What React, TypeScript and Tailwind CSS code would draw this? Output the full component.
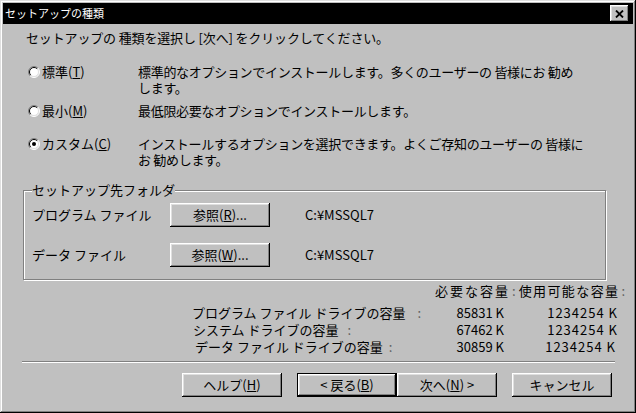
import React from 'react';

const bevel =
  "shadow-[inset_-1px_-1px_0_#000,inset_1px_1px_0_#fff,inset_-2px_-2px_0_#808080,inset_2px_2px_0_#dfdfdf]";

function Radio({ checked }: { checked?: boolean }) {
  return (
    <svg width="12" height="12" viewBox="0 0 12 12" className="block">
      <circle cx="6" cy="6" r="5" fill="#fff" />
      <path d="M2.1 9.9 A5.5 5.5 0 0 1 9.9 2.1" fill="none" stroke="#808080" />
      <path d="M9.9 2.1 A5.5 5.5 0 0 1 2.1 9.9" fill="none" stroke="#fff" />
      <path d="M2.8 9.2 A4.5 4.5 0 0 1 9.2 2.8" fill="none" stroke="#000" />
      <path d="M9.2 2.8 A4.5 4.5 0 0 1 2.8 9.2" fill="none" stroke="#dfdfdf" />
      {checked && <circle cx="6" cy="6" r="2" fill="#000" />}
    </svg>
  );
}

type OptProps = { label: string; mnemonic: string; lines: string[]; checked?: boolean; className: string };

function Option({ label, mnemonic, lines, checked, className }: OptProps) {
  return (
    <div className={"flex items-start leading-[16px] " + className}>
      <div className="ml-[25px] mt-[2px] w-[12px]">
        <Radio checked={checked} />
      </div>
      <div className="ml-[2px] w-[96px]">
        {label}(<span className="underline">{mnemonic}</span>)
      </div>
      <div className="tracking-[-0.3px]">
        {lines.map((l) => (
          <div key={l}>{l}</div>
        ))}
      </div>
    </div>
  );
}

function Btn({ children, def, className }: { children: React.ReactNode; def?: boolean; className?: string }) {
  return (
    <div
      className={
        "w-[100px] h-[24px] flex items-center justify-center bg-[#c0c0c0] leading-[14px] " +
        bevel +
        (def ? " border border-black" : "") +
        " " +
        (className ?? "")
      }
    >
      {children}
    </div>
  );
}

export default function App() {
  return (
    <div className="w-[636px] h-[413px] bg-[#c0c0c0] p-[3px] flex flex-col text-[13px] text-black font-['MS_UI_Gothic','Noto_Sans_CJK_JP',sans-serif] shadow-[inset_-1px_-1px_0_#000,inset_1px_1px_0_#dfdfdf,inset_-2px_-2px_0_#808080,inset_2px_2px_0_#fff]">
      {/* title bar */}
      <div className="h-[21px] bg-black flex items-center justify-between pl-[2px] pr-[4px]">
        <span className="text-white text-[11px] leading-[21px]">セットアップの種類</span>
        <div className={"w-[19px] h-[17px] bg-[#c0c0c0] flex items-center justify-center " + bevel}>
          <svg width="9" height="8" viewBox="0 0 9 8">
            <path d="M1 0.5 L8 7.5 M8 0.5 L1 7.5" stroke="#000" strokeWidth="1.8" />
          </svg>
        </div>
      </div>

      <p className="mt-[7px] ml-[23px] leading-[14px] tracking-[-0.15px]">
        セットアップの 種類を選択し [次へ] をクリックしてください。
      </p>

      <Option
        className="mt-[19px]"
        label="標準"
        mnemonic="T"
        lines={["標準的なオプションでインストールします。多くのユーザーの 皆様にお 勧め", "します。"]}
      />
      <Option className="mt-[7px]" label="最小" mnemonic="M" lines={["最低限必要なオプションでインストールします。"]} />
      <Option
        className="mt-[17px]"
        label="カスタム"
        mnemonic="C"
        checked
        lines={["インストールするオプションを選択できます。よくご存知のユーザーの 皆様に", "お 勧めします。"]}
      />

      {/* destination folder group */}
      <div className="mt-[22px] ml-[20px] w-[583px] h-[90px] shrink-0 border border-[#808080] shadow-[inset_1px_1px_0_#fff,1px_1px_0_#fff] flex flex-col">
        <div className="-mt-[8px] ml-[8px] w-fit bg-[#c0c0c0] leading-[14px]">セットアップ先フォルダ</div>
        <div className="mt-[6px] flex items-center h-[24px]">
          <span className="ml-[8px] w-[138px]">プログラム ファイル</span>
          <Btn>
            参照(<span className="underline">R</span>)...
          </Btn>
          <span className="ml-[35px]">C:¥MSSQL7</span>
        </div>
        <div className="mt-[16px] flex items-center h-[24px]">
          <span className="ml-[8px] w-[138px]">データ ファイル</span>
          <Btn>
            参照(<span className="underline">W</span>)...
          </Btn>
          <span className="ml-[35px]">C:¥MSSQL7</span>
        </div>
      </div>

      {/* disk space table */}
      <div className="mt-[4px] flex leading-[14px]">
        <span className="ml-[432px] tracking-[2px]">必要な容量</span>
        <span className="ml-[2px] text-[#606060]">:</span>
        <span className="ml-[3px] tracking-[1.4px]">使用可能な容量</span>
        <span className="ml-[2px] text-[#606060]">:</span>
      </div>
      <div className="mt-[6px] flex flex-col leading-[17px]">
        <div className="flex">
          <span className="ml-[189px] w-[243px]">
            プログラム ファイル ドライブの容量<span className="ml-[12px] text-[#606060]">:</span>
          </span>
          <span className="w-[69px] text-right">85831 K</span>
          <span className="w-[114px] text-right tracking-[1px]">1234254 K</span>
        </div>
        <div className="flex">
          <span className="ml-[190px] w-[242px]">
            システム ドライブの容量<span className="ml-[9px] text-[#606060]">:</span>
          </span>
          <span className="w-[69px] text-right">67462 K</span>
          <span className="w-[114px] text-right tracking-[1px]">1234254 K</span>
        </div>
        <div className="flex">
          <span className="ml-[192px] w-[240px]">
            データ ファイル ドライブの容量<span className="ml-[6px] text-[#606060]">:</span>
          </span>
          <span className="w-[69px] text-right">30859 K</span>
          <span className="w-[112px] text-right tracking-[1px]">1234254 K</span>
        </div>
      </div>

      <div className="mt-[6px] ml-[19px] w-[593px] h-[2px] border-t border-[#808080] border-b border-b-white" />

      <div className="mt-[10px] flex">
        <Btn className="ml-[179px]">
          ヘルプ(<span className="underline">H</span>)
        </Btn>
        <Btn className="ml-[15px]" def>
          &lt; 戻る(<span className="underline">B</span>)
        </Btn>
        <Btn>
          次へ(<span className="underline">N</span>) &gt;
        </Btn>
        <Btn className="ml-[15px]">キャンセル</Btn>
      </div>
    </div>
  );
}
